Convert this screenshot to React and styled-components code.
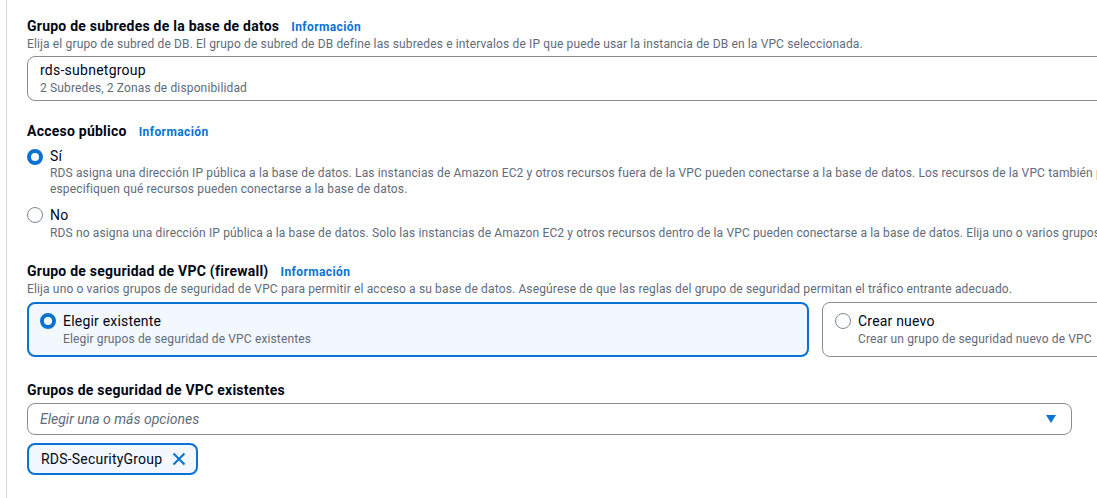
import React, { useState } from "react";
import styled, { createGlobalStyle } from "styled-components";

const GlobalStyle = createGlobalStyle`
  body {
    margin: 0;
    background: #ffffff;
    overflow: hidden;
    font-family: Roboto, "Liberation Sans", Arial, sans-serif;
    color: #000716;
  }
`;

const Panel = styled.div`
  box-sizing: border-box;
  margin-left: 6px;
  border-left: 1px solid #d1d5db;
  padding: 17px 0 0 20px;
  width: 1598px;
  height: 100vh;
`;

const Section = styled.section`
  margin-top: ${(p) => p.$gap || 0}px;
`;

const TitleRow = styled.div`
  display: flex;
  align-items: baseline;
  gap: 12px;
`;

const Title = styled.h3`
  margin: 0;
  font-size: 14px;
  line-height: 18px;
  font-weight: 700;
  letter-spacing: 0.24px;
  color: #000716;
`;

const InfoLink = styled.a`
  font-size: 12px;
  font-weight: 700;
  letter-spacing: 0.4px;
  color: #0972d3;
  text-decoration: none;
  cursor: pointer;
`;

const Description = styled.p`
  margin: 1px 0 0;
  font-size: 12px;
  line-height: 16px;
  letter-spacing: 0.14px;
  color: #5f6b7a;
  white-space: nowrap;
`;

const SelectBox = styled.div`
  margin-top: 4px;
  border: 1px solid #8c8c94;
  border-radius: 8px;
  padding: 4px 12px 4px;
`;

const SelectValue = styled.div`
  font-size: 14px;
  line-height: 18px;
  letter-spacing: 0.25px;
  color: #000716;
`;

const SelectMeta = styled.div`
  margin-top: 1px;
  font-size: 12px;
  line-height: 16px;
  letter-spacing: 0.14px;
  color: #5f6b7a;
`;

const RadioOption = styled.label`
  display: flex;
  gap: 7px;
  margin-top: ${(p) => p.$gap || 0}px;
  cursor: pointer;
`;

const RadioDot = styled.span`
  flex: none;
  box-sizing: border-box;
  width: 16px;
  height: 16px;
  margin-top: 1px;
  border-radius: 50%;
  background: #ffffff;
  border: ${(p) => (p.$checked ? "4.5px solid #0972d3" : "1px solid #7d8998")};
`;

const RadioText = styled.div`
  display: flex;
  flex-direction: column;
`;

const RadioLabel = styled.span`
  font-size: 14px;
  line-height: ${(p) => p.$lh || 17}px;
  letter-spacing: 0.2px;
  color: #000716;
`;

const RadioDesc = styled.span`
  font-size: 12px;
  line-height: 16px;
  letter-spacing: 0.14px;
  color: #5f6b7a;
  white-space: nowrap;
`;

const TileGrid = styled.div`
  margin-top: 5px;
  display: grid;
  grid-template-columns: 782px 782px;
  gap: 13px;
`;

const Tile = styled.div`
  box-sizing: border-box;
  height: 55px;
  border-radius: 8px;
  border: ${(p) => (p.$checked ? "2px solid #0972d3" : "1px solid #8c8c94")};
  background: ${(p) => (p.$checked ? "#f2f8fd" : "#ffffff")};
  padding: ${(p) => (p.$checked ? "8px 11px 0" : "9px 12px 0")};
  cursor: pointer;
`;

const MultiSelect = styled.div`
  margin-top: 4px;
  box-sizing: border-box;
  width: 1045px;
  height: 32px;
  border: 1px solid #8c8c94;
  border-radius: 8px;
  padding: 0 15px 0 12px;
  display: flex;
  align-items: center;
  justify-content: space-between;
`;

const Placeholder = styled.span`
  font-size: 14px;
  font-style: italic;
  color: #5f6b7a;
`;

const TokenList = styled.div`
  margin-top: 8px;
  display: flex;
  gap: 8px;
`;

const Token = styled.div`
  box-sizing: border-box;
  height: 32px;
  display: flex;
  align-items: center;
  gap: 10px;
  padding: 0 10px 0 12px;
  border: 2px solid #0972d3;
  border-radius: 8px;
  background: #f2f8fd;
  font-size: 14px;
  letter-spacing: 0.2px;
  color: #000716;
`;

const Dismiss = styled.button`
  border: 0;
  padding: 0;
  background: none;
  display: flex;
  cursor: pointer;
`;

const Caret = () => (
  <svg width="10" height="8" viewBox="0 0 10 8">
    <path d="M0 0 H10 L5 8 Z" fill="#0972d3" />
  </svg>
);

const CloseIcon = () => (
  <svg width="14" height="14" viewBox="0 0 14 14">
    <path d="M1.5 1.5 L12.5 12.5 M12.5 1.5 L1.5 12.5" stroke="#0972d3" strokeWidth="2" fill="none" />
  </svg>
);

export default function App() {
  const [access, setAccess] = useState("si");
  const [sg, setSg] = useState("existing");
  const [tokens, setTokens] = useState(["RDS-SecurityGroup"]);

  return (
    <>
      <GlobalStyle />
      <Panel>
        <Section>
          <TitleRow>
            <Title>Grupo de subredes de la base de datos</Title>
            <InfoLink>Información</InfoLink>
          </TitleRow>
          <Description>
            Elija el grupo de subred de DB. El grupo de subred de DB define las subredes e intervalos de IP que puede usar la instancia de DB en la VPC seleccionada.
          </Description>
          <SelectBox>
            <SelectValue>rds-subnetgroup</SelectValue>
            <SelectMeta>2 Subredes, 2 Zonas de disponibilidad</SelectMeta>
          </SelectBox>
        </Section>

        <Section $gap={21}>
          <TitleRow>
            <Title>Acceso público</Title>
            <InfoLink>Información</InfoLink>
          </TitleRow>
          <RadioOption $gap={8} onClick={() => setAccess("si")}>
            <RadioDot $checked={access === "si"} />
            <RadioText>
              <RadioLabel>Sí</RadioLabel>
              <RadioDesc>
                RDS asigna una dirección IP pública a la base de datos. Las instancias de Amazon EC2 y otros recursos fuera de la VPC pueden conectarse a la base de datos. Los recursos de la VPC también pueden conectarse a la base de datos. Elija uno o varios grupos de seguridad de VPC que
              </RadioDesc>
              <RadioDesc>especifiquen qué recursos pueden conectarse a la base de datos.</RadioDesc>
            </RadioText>
          </RadioOption>
          <RadioOption $gap={9} onClick={() => setAccess("no")}>
            <RadioDot $checked={access === "no"} />
            <RadioText>
              <RadioLabel $lh={19}>No</RadioLabel>
              <RadioDesc>
                RDS no asigna una dirección IP pública a la base de datos. Solo las instancias de Amazon EC2 y otros recursos dentro de la VPC pueden conectarse a la base de datos. Elija uno o varios grupos de seguridad de VPC que especifiquen qué recursos pueden conectarse a la base de datos.
              </RadioDesc>
            </RadioText>
          </RadioOption>
        </Section>

        <Section $gap={21}>
          <TitleRow>
            <Title>Grupo de seguridad de VPC (firewall)</Title>
            <InfoLink>Información</InfoLink>
          </TitleRow>
          <Description>
            Elija uno o varios grupos de seguridad de VPC para permitir el acceso a su base de datos. Asegúrese de que las reglas del grupo de seguridad permitan el tráfico entrante adecuado.
          </Description>
          <TileGrid>
            <Tile $checked={sg === "existing"} onClick={() => setSg("existing")}>
              <RadioOption>
                <RadioDot $checked={sg === "existing"} />
                <RadioText>
                  <RadioLabel $lh={19}>Elegir existente</RadioLabel>
                  <RadioDesc>Elegir grupos de seguridad de VPC existentes</RadioDesc>
                </RadioText>
              </RadioOption>
            </Tile>
            <Tile $checked={sg === "new"} onClick={() => setSg("new")}>
              <RadioOption>
                <RadioDot $checked={sg === "new"} />
                <RadioText>
                  <RadioLabel $lh={19}>Crear nuevo</RadioLabel>
                  <RadioDesc>Crear un grupo de seguridad nuevo de VPC</RadioDesc>
                </RadioText>
              </RadioOption>
            </Tile>
          </TileGrid>
        </Section>

        <Section $gap={24}>
          <Title>Grupos de seguridad de VPC existentes</Title>
          <MultiSelect>
            <Placeholder>Elegir una o más opciones</Placeholder>
            <Caret />
          </MultiSelect>
          <TokenList>
            {tokens.map((t) => (
              <Token key={t}>
                {t}
                <Dismiss onClick={() => setTokens(tokens.filter((x) => x !== t))}>
                  <CloseIcon />
                </Dismiss>
              </Token>
            ))}
          </TokenList>
        </Section>
      </Panel>
    </>
  );
}
